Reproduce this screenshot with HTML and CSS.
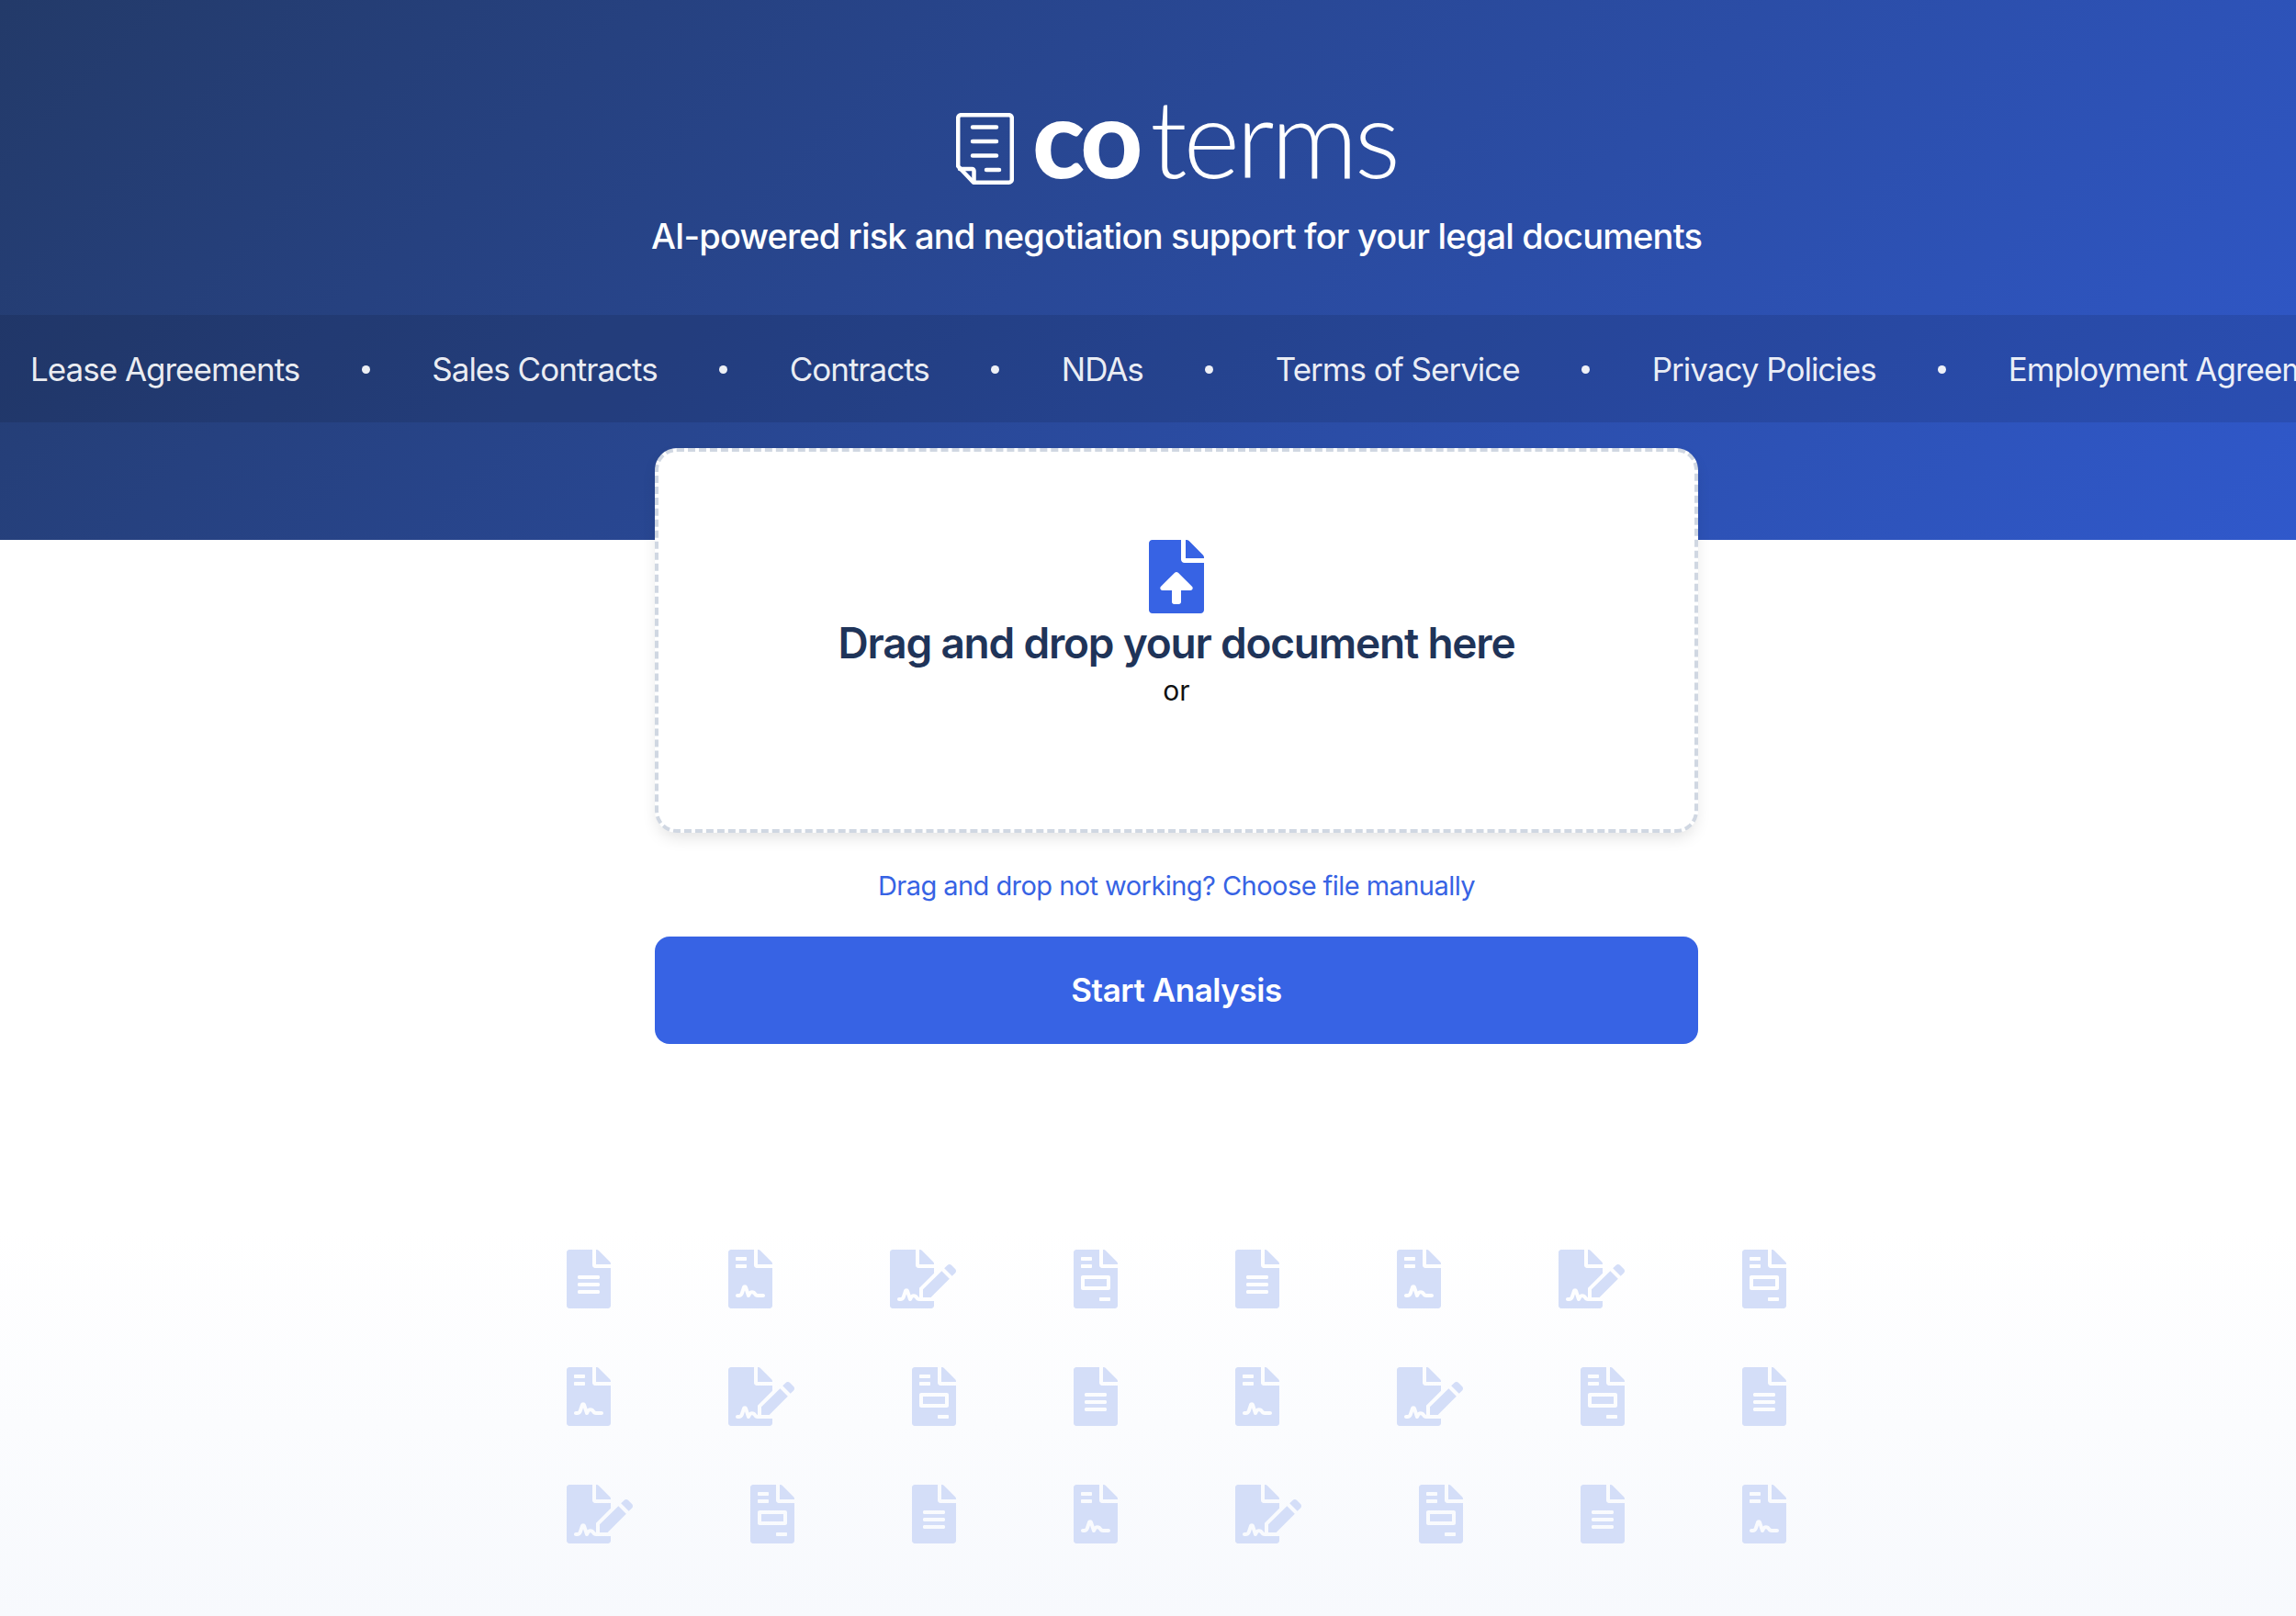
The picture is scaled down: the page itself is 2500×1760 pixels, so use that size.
FILE: index.html
```html
<!DOCTYPE html>
<html lang="en">
<head>
    <meta charset="UTF-8">
    <meta name="viewport" content="width=device-width, initial-scale=1.0">
    <title>coterms</title>
    <link rel="stylesheet" href="styles.css">
</head>
<body>

<svg class="icon-defs" xmlns="http://www.w3.org/2000/svg">
    <symbol id="file-lines" viewBox="0 0 384 512"><path d="M224 136V0H24C10.7 0 0 10.7 0 24v464c0 13.3 10.7 24 24 24h336c13.3 0 24-10.7 24-24V160H248c-13.2 0-24-10.8-24-24zm64 236c0 6.6-5.4 12-12 12H108c-6.6 0-12-5.4-12-12v-8c0-6.6 5.4-12 12-12h168c6.6 0 12 5.4 12 12v8zm0-64c0 6.6-5.4 12-12 12H108c-6.6 0-12-5.4-12-12v-8c0-6.6 5.4-12 12-12h168c6.6 0 12 5.4 12 12v8zm0-72v8c0 6.6-5.4 12-12 12H108c-6.6 0-12-5.4-12-12v-8c0-6.6 5.4-12 12-12h168c6.6 0 12 5.4 12 12zm96-114.1v6.1H256V0h6.1c6.4 0 12.5 2.5 17 7l97.9 98c4.5 4.5 7 10.6 7 16.9z"/></symbol>
    <symbol id="file-contract" viewBox="0 0 384 512"><path d="M224 136V0H24C10.7 0 0 10.7 0 24v464c0 13.3 10.7 24 24 24h336c13.3 0 24-10.7 24-24V160H248c-13.2 0-24-10.8-24-24zM64 72c0-4.42 3.58-8 8-8h80c4.42 0 8 3.58 8 8v16c0 4.42-3.58 8-8 8H72c-4.42 0-8-3.58-8-8V72zm0 64c0-4.42 3.58-8 8-8h80c4.42 0 8 3.58 8 8v16c0 4.42-3.58 8-8 8H72c-4.42 0-8-3.58-8-8v-16zm192.81 248H304c8.84 0 16 7.16 16 16s-7.16 16-16 16h-47.19c-16.45 0-31.27-9.14-38.64-23.86-2.95-5.92-8.09-6.52-10.17-6.52s-7.22.59-10.02 6.19l-7.67 15.34a15.986 15.986 0 0 1-14.31 8.84c-.38 0-.75-.02-1.14-.05-6.45-.45-12-4.75-14.03-10.89L144 354.59l-10.61 31.88c-5.89 17.66-22.38 29.53-41 29.53H80c-8.84 0-16-7.16-16-16s7.16-16 16-16h12.39c4.83 0 9.11-3.08 10.64-7.66l18.19-54.64c3.3-9.81 12.44-16.41 22.78-16.41s19.48 6.59 22.77 16.41l13.88 41.64c19.77-16.19 54.05-9.7 66 14.16 2.02 4.06 5.96 6.5 10.16 6.5zM377 105L279.1 7c-4.5-4.5-10.6-7-17-7H256v128h128v-6.1c0-6.3-2.5-12.4-7-16.9z"/></symbol>
    <symbol id="file-signature" viewBox="0 0 576 512"><path d="M218.17 424.14c-2.95-5.92-8.09-6.52-10.17-6.52s-7.22.59-10.02 6.19l-7.67 15.34c-6.37 12.78-25.03 11.37-29.48-2.09L144 386.59l-10.61 31.88c-5.89 17.66-22.38 29.53-41 29.53H80c-8.84 0-16-7.16-16-16s7.16-16 16-16h12.39c4.83 0 9.11-3.08 10.64-7.66l18.19-54.64c3.3-9.81 12.44-16.41 22.78-16.41s19.48 6.59 22.77 16.41l13.88 41.64c19.75-16.19 54.06-9.7 66 14.16 1.89 3.78 5.49 5.95 9.36 6.26v-82.12l128-127.09V160H248c-13.2 0-24-10.8-24-24V0H24C10.7 0 0 10.7 0 24v464c0 13.3 10.7 24 24 24h336c13.3 0 24-10.7 24-24v-40l-128-.11c-16.12-.31-30.58-9.28-37.83-23.75zM384 121.9c0-6.3-2.5-12.4-7-16.9L279.1 7c-4.5-4.5-10.6-7-17-7H256v128h128v-6.1zm-96 225.06V416h68.99l161.68-162.78-67.88-67.88L288 346.96zm280.54-179.63l-31.87-31.87c-9.94-9.94-26.07-9.94-36.01 0l-27.25 27.25 67.88 67.88 27.25-27.25c9.95-9.94 9.95-26.07 0-36.01z"/></symbol>
    <symbol id="file-invoice" viewBox="0 0 384 512"><path d="M288 256H96v64h192v-64zm89-151L279.1 7c-4.5-4.5-10.6-7-17-7H256v128h128v-6.1c0-6.3-2.5-12.4-7-16.9zm-153 31V0H24C10.7 0 0 10.7 0 24v464c0 13.3 10.7 24 24 24h336c13.3 0 24-10.7 24-24V160H248c-13.2 0-24-10.8-24-24zM64 72c0-4.42 3.58-8 8-8h80c4.42 0 8 3.58 8 8v16c0 4.42-3.58 8-8 8H72c-4.42 0-8-3.58-8-8V72zm0 64c0-4.42 3.58-8 8-8h80c4.42 0 8 3.58 8 8v16c0 4.42-3.58 8-8 8H72c-4.42 0-8-3.58-8-8v-16zm256 304c0 4.42-3.58 8-8 8h-80c-4.42 0-8-3.58-8-8v-16c0-4.42 3.58-8 8-8h80c4.42 0 8 3.58 8 8v16zm0-200v96c0 8.84-7.16 16-16 16H80c-8.84 0-16-7.16-16-16v-96c0-8.84 7.16-16 16-16h224c8.84 0 16 7.16 16 16z"/></symbol>
</svg>

<div class="page">
    <div class="hero">
        <div class="logo">
            <svg class="logo-icon" viewBox="0 0 63 78" fill="none" stroke="#fff" stroke-width="4.500" stroke-linecap="round" stroke-linejoin="round">
                <path d="M19 75.700H57.500a3.300 3.300 0 0 0 3.300-3.300V5.500a3.300 3.300 0 0 0-3.300-3.300H5.500a3.300 3.300 0 0 0-3.300 3.300V58z"/>
                <path d="M4 61H17.500a2 2 0 0 1 2 2V75"/>
                <path d="M18 15.500H44M18 31H44M18 46.500H44M33 62H47"/>
            </svg>
            <span class="logo-text"><b>co</b>terms</span>
        </div>
        <p class="tagline">AI-powered risk and negotiation support for your legal documents</p>
        <div class="ticker">
            <span>Lease Agreements</span><i></i>
            <span>Sales Contracts</span><i></i>
            <span>Contracts</span><i></i>
            <span>NDAs</span><i></i>
            <span>Terms of Service</span><i></i>
            <span>Privacy Policies</span><i></i>
            <span>Employment Agreements</span>
        </div>
    </div>

    <div class="upload">
        <div class="dropzone">
            <svg class="upload-icon" viewBox="0 0 384 512"><path d="M224 136V0H24C10.7 0 0 10.7 0 24v464c0 13.3 10.7 24 24 24h336c13.3 0 24-10.7 24-24V160H248c-13.2 0-24-10.8-24-24zm65.18 216.01H224v80c0 8.84-7.16 16-16 16h-32c-8.84 0-16-7.16-16-16v-80H94.82c-14.28 0-21.41-17.29-11.27-27.36l96.42-95.7c6.65-6.61 17.39-6.61 24.04 0l96.42 95.7c10.15 10.07 3.03 27.36-11.25 27.36zM377 105L279.1 7c-4.5-4.5-10.6-7-17-7H256v128h128v-6.1c0-6.3-2.5-12.4-7-16.9z"/></svg>
            <h2>Drag and drop your document here</h2>
            <p>or</p>
        </div>
        <a class="manual-link" href="#">Drag and drop not working? Choose file manually</a>
        <button class="start-btn">Start Analysis</button>
    </div>

    <div class="doc-grid" id="doc-grid"></div>
</div>

<script>
    // rows of the faded background icons
    const rows = [
        ['lines', 'contract', 'signature', 'invoice', 'lines', 'contract', 'signature', 'invoice'],
        ['contract', 'signature', 'invoice', 'lines', 'contract', 'signature', 'invoice', 'lines'],
        ['signature', 'invoice', 'lines', 'contract', 'signature', 'invoice', 'lines', 'contract']
    ];

    const grid = document.getElementById('doc-grid');
    rows.flat().forEach(name => {
        const wide = name === 'signature' ? ' wide' : '';
        grid.innerHTML += `<svg class="doc-icon${wide}"><use href="#file-${name}"/></svg>`;
    });
</script>

</body>
</html>
```

FILE: styles.css
```css
* {
    box-sizing: border-box;
}
html, body {
    margin: 0;
    height: 100%;
    overflow: hidden;
}
body {
    font-family: Inter, "Liberation Sans", sans-serif;
    background: #fff;
}
.icon-defs {
    display: none;
}
.page {
    width: 2562px;
    height: 1760px;
    background: linear-gradient(180deg, #fff 1340px, #f7f9fd 1760px);
}
.hero {
    height: 588px;
    padding-top: 120px;
    background: linear-gradient(135deg, #233a69 0%, #3059cd 100%);
    color: #fff;
    text-align: center;
}
.logo {
    display: flex;
    justify-content: center;
    align-items: center;
    height: 82px;
    gap: 20px;
}
.logo-icon {
    width: 63px;
    height: 78px;
    margin-top: 2px;
}
.logo-text {
    margin-top: -24px;
    font-family: Lato, sans-serif;
    font-size: 118px;
    font-weight: 300;
    letter-spacing: -4px;
    line-height: 82px;
}
.logo-text b {
    margin-right: 12px;
    font-weight: 900;
}
.tagline {
    margin: 33px 0 0;
    font-size: 38px;
    font-weight: 500;
    letter-spacing: -0.83px;
    line-height: 44px;
}
.ticker {
    display: flex;
    align-items: center;
    gap: 67.5px;
    height: 117px;
    margin-top: 64px;
    padding-left: 33px;
    background: rgba(0, 0, 0, 0.1);
    font-size: 35px;
    letter-spacing: -1px;
    white-space: nowrap;
}
.ticker span {
    flex: none;
    color: rgba(255, 255, 255, 0.92);
}
.ticker i {
    flex: none;
    width: 9px;
    height: 9px;
    margin-top: 2px;
    border-radius: 50%;
    background: rgba(255, 255, 255, 0.92);
}
.upload {
    display: flex;
    flex-direction: column;
    align-items: center;
    width: 1136px;
    margin: -100px auto 0;
}
.dropzone {
    display: flex;
    flex-direction: column;
    align-items: center;
    width: 100%;
    height: 419px;
    padding-top: 96px;
    background: #fff;
    border: 4px dashed #d0d7e2;
    border-radius: 24px;
    box-shadow: 0 8px 18px -4px rgba(0, 0, 0, 0.13);
}
.upload-icon {
    width: 60px;
    height: 80px;
    fill: #3763e4;
}
.dropzone h2 {
    margin: 4px 0 0;
    color: #1f3459;
    font-size: 46px;
    font-weight: 600;
    letter-spacing: -1.2px;
    line-height: 56px;
}
.dropzone p {
    margin: 6px 0 0;
    color: #111;
    font-size: 30px;
    line-height: 36px;
}
.manual-link {
    margin-top: 40px;
    color: #3763e4;
    font-size: 29px;
    letter-spacing: -0.55px;
    line-height: 36px;
    text-decoration: none;
}
.start-btn {
    width: 100%;
    height: 117px;
    margin-top: 37px;
    padding-bottom: 3px;
    background: #3763e4;
    border: none;
    border-radius: 16px;
    color: #fff;
    font-family: inherit;
    font-size: 35px;
    font-weight: 600;
    letter-spacing: -0.45px;
}
.doc-grid {
    display: flex;
    flex-wrap: wrap;
    gap: 64px 128px;
    width: 1328px;
    margin: 224px auto 0;
}
.doc-icon {
    width: 48px;
    height: 64px;
    fill: #d4def8;
}
.doc-icon.wide {
    width: 72px;
}
```
